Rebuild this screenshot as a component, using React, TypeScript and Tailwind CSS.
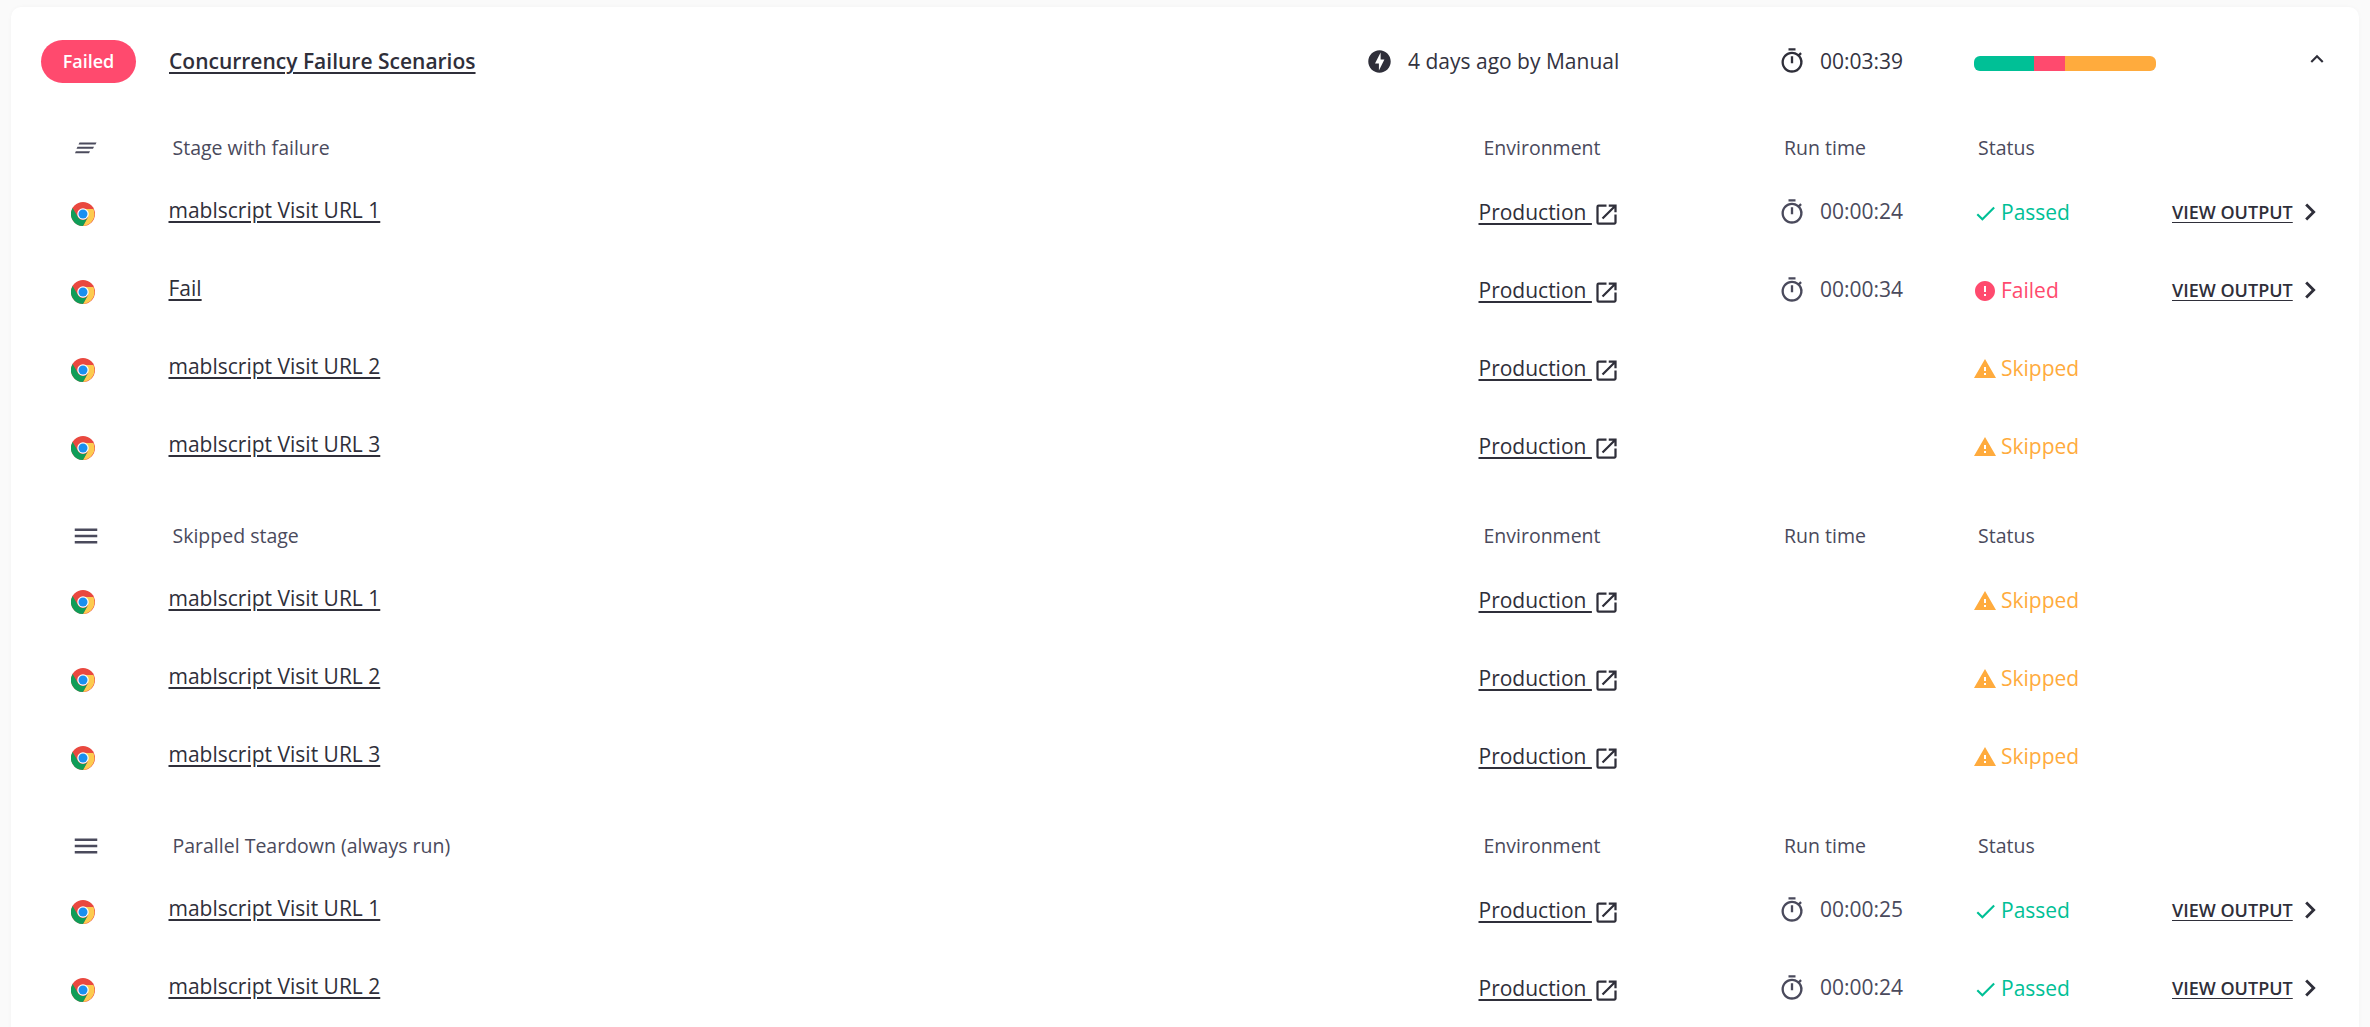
import React from "react";
import {
  MdOfflineBolt,
  MdOutlineTimer,
  MdOpenInNew,
  MdError,
  MdWarning,
  MdMenu,
  MdChevronRight,
  MdKeyboardArrowUp,
  MdCheck,
} from "react-icons/md";

function Chrome() {
  return (
    <svg width="24" height="24" viewBox="0 0 48 48" className="shrink-0">
      <circle cx="24" cy="24" r="24" fill="#e9483f" />
      <path d="M24 14 H44.8 A24 24 0 0 1 24 48 L34 30 Z" fill="#fdcb4f" />
      <path d="M3.2 12 L14 30 A11.5 11.5 0 0 0 34 30 L24 48 A24 24 0 0 1 3.2 12 Z" fill="#0f9d58" />
      <circle cx="24" cy="24" r="11.5" fill="#ffffff" />
      <circle cx="24" cy="24" r="9" fill="#1a8ff0" />
    </svg>
  );
}

function SkewMenu() {
  return (
    <svg width="22" height="12" viewBox="0 0 22 12">
      <path d="M4.5 0.5 H21.5 L20.5 2.5 H3.5 Z" fill="#4b4b5c" />
      <path d="M2.5 4.8 H19 L18 6.8 H1.5 Z" fill="#4b4b5c" />
      <path d="M0.8 9.3 H15 L14 11.3 H0 Z" fill="#4b4b5c" />
    </svg>
  );
}

const GRID = "grid grid-cols-[157.5px_1310px_303.5px_190px_195px_192px] items-center";

function StageHeader({ name, skew }: { name: string; skew?: boolean }) {
  return (
    <div className={`${GRID} h-[30px] mb-[12px] text-[19.5px] text-[#4a4a5c]`}>
      <div className="flex justify-center pl-[12px] pr-[22px] ml-[3px]">
        {skew ? <SkewMenu /> : <MdMenu size={30} className="text-[#4a4a5c]" />}
      </div>
      <div className="pl-[4px]">{name}</div>
      <div className="pl-[5px]">Environment</div>
      <div className="pl-[2px]">Run time</div>
      <div className="pl-[6px]">Status</div>
      <div />
    </div>
  );
}

function Status({ s }: { s: "passed" | "failed" | "skipped" }) {
  if (s === "passed")
    return (
      <div className="flex items-center gap-[3px] pl-[1px] text-[#00c096] -translate-y-[1px]">
        <MdCheck size={25} />
        <span>Passed</span>
      </div>
    );
  if (s === "failed")
    return (
      <div className="flex items-center gap-[4px] pl-[1px] text-[#ff4a6e] -translate-y-[1px]">
        <MdError size={24} />
        <span>Failed</span>
      </div>
    );
  return (
    <div className="flex items-center gap-[4px] pl-[1px] text-[#ffab3d] -translate-y-[1px]">
      <MdWarning size={24} />
      <span>Skipped</span>
    </div>
  );
}

type RowT = { name: string; time?: string; s: "passed" | "failed" | "skipped" };

function Row({ name, time, s }: RowT) {
  return (
    <div className={`${GRID} h-[78px] text-[21px] text-[#33333f]`}>
      <div className="flex pl-[60px]">
        <Chrome />
      </div>
      <a className="underline underline-offset-[3px] -translate-y-[3px] justify-self-start text-[#2f2f3a]">{name}</a>
      <div className="flex items-center -translate-y-[1px]">
        <a className="underline underline-offset-[3px] whitespace-pre text-[#2f2f3a]">{"Production "}</a>
        <MdOpenInNew size={27} className="text-[#2f2f3a] ml-[1px] mt-[3px]" />
      </div>
      <div className="-translate-y-[2px]">
        {time && (
          <div className="flex items-center gap-[14px] text-[#4a4a5c]">
            <MdOutlineTimer size={28} className="-ml-[4px]" />
            <span>{time}</span>
          </div>
        )}
      </div>
      <Status s={s} />
      <div>
        {time && (
          <div className="flex items-center gap-[0px] pl-[5px] -translate-y-[2px]">
            <a className="underline underline-offset-[3px] text-[18px] font-semibold text-[#2f2f3a]">VIEW OUTPUT</a>
            <MdChevronRight size={34} className="text-[#2f2f3a]" />
          </div>
        )}
      </div>
    </div>
  );
}

const stages: { name: string; skew?: boolean; rows: RowT[] }[] = [
  {
    name: "Stage with failure",
    skew: true,
    rows: [
      { name: "mablscript Visit URL 1", time: "00:00:24", s: "passed" },
      { name: "Fail", time: "00:00:34", s: "failed" },
      { name: "mablscript Visit URL 2", s: "skipped" },
      { name: "mablscript Visit URL 3", s: "skipped" },
    ],
  },
  {
    name: "Skipped stage",
    rows: [
      { name: "mablscript Visit URL 1", s: "skipped" },
      { name: "mablscript Visit URL 2", s: "skipped" },
      { name: "mablscript Visit URL 3", s: "skipped" },
    ],
  },
  {
    name: "Parallel Teardown (always run)",
    rows: [
      { name: "mablscript Visit URL 1", time: "00:00:25", s: "passed" },
      { name: "mablscript Visit URL 2", time: "00:00:24", s: "passed" },
    ],
  },
];

export default function App() {
  return (
    <div className="h-screen overflow-hidden bg-[#fafafa] pt-[7px] pl-[11px] pr-[11px] font-['Open_Sans',sans-serif]">
      <div className="bg-white rounded-t-[10px] min-h-[1200px] shadow-[0_0_4px_rgba(0,0,0,0.03)]">
        <div className="flex items-center h-[108px] mb-[18px] text-[21px] text-[#33333f] pl-[30px]">
          <span className="w-[95px] h-[43px] shrink-0 rounded-full bg-[#ff4a6e] text-white text-[18px] font-semibold flex items-center justify-center">Failed</span>
          <a className="ml-[33px] w-[1199px] shrink-0 font-semibold underline underline-offset-[3px] text-[#2f2f3a] translate-y-[1px]">Concurrency Failure Scenarios</a>
          <MdOfflineBolt size={27} className="-ml-[2px] shrink-0 text-[#2f2f3a]" />
          <span className="ml-[15px] w-[372px] shrink-0 translate-y-[1px]">4 days ago by Manual</span>
          <MdOutlineTimer size={28} className="text-[#2f2f3a] -ml-[2px] shrink-0" />
          <span className="ml-[14px] w-[154px] shrink-0 text-[#33333f] translate-y-[1px]">00:03:39</span>
          <div className="flex w-[182px] h-[15px] shrink-0 rounded-[6px] overflow-hidden shadow-[inset_0_-1px_0_rgba(0,0,0,0.1)] mt-[5px]">
            <div className="w-[60px] bg-[#00c096]" />
            <div className="w-[31px] bg-[#ff4a6e]" />
            <div className="flex-1 bg-[#ffab3d]" />
          </div>
          <MdKeyboardArrowUp size={26} className="ml-[148px] shrink-0 text-[#2f2f3a] -translate-y-[2px]" />
        </div>
        <div className="flex flex-col gap-[34px]">
          {stages.map((st) => (
            <div key={st.name} className="flex flex-col">
              <StageHeader name={st.name} skew={st.skew} />
              {st.rows.map((r, i) => (
                <Row key={i} {...r} />
              ))}
            </div>
          ))}
        </div>
      </div>
    </div>
  );
}
